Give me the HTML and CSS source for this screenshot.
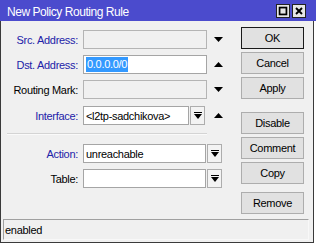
FILE: index.html
```html
<!DOCTYPE html>
<html>
<head>
<meta charset="utf-8">
<link rel="stylesheet" href="styles.css">
</head>
<body>
<div class="window">
  <div class="titlebar">
    <span class="title">New Policy Routing Rule</span>
    <div class="wbtns">
      <span class="wbtn"><svg width="14" height="14" viewBox="0 0 14 14"><rect x="3" y="3" width="8" height="8" fill="none" stroke="#000" stroke-width="2"/></svg></span>
      <span class="wbtn"><svg width="14" height="14" viewBox="0 0 14 14"><path d="M3.5 3.5 L10.5 10.5 M10.5 3.5 L3.5 10.5" stroke="#000" stroke-width="2.2"/></svg></span>
    </div>
  </div>
  <div class="body">
    <div class="main">
      <div class="form">
        <div class="row">
          <span class="label blue">Src. Address:</span>
          <span class="field disabled w-full"></span>
          <svg class="arrow" width="9" height="5" viewBox="0 0 9 5"><path d="M0 0 H9 L4.5 5 Z" fill="#000"/></svg>
        </div>
        <div class="row">
          <span class="label blue">Dst. Address:</span>
          <span class="field w-full"><span class="sel">0.0.0.0/0</span></span>
          <svg class="arrow" width="9" height="5" viewBox="0 0 9 5"><path d="M0 5 H9 L4.5 0 Z" fill="#000"/></svg>
        </div>
        <div class="row">
          <span class="label">Routing Mark:</span>
          <span class="field disabled w-full"></span>
          <svg class="arrow" width="9" height="5" viewBox="0 0 9 5"><path d="M0 0 H9 L4.5 5 Z" fill="#000"/></svg>
        </div>
        <div class="row row-if">
          <span class="label blue">Interface:</span>
          <span class="field w-if">&lt;l2tp-sadchikova&gt;</span>
          <span class="dd"><svg width="8" height="7" viewBox="0 0 8 7"><rect x="0" y="0" width="8" height="1" fill="#000"/><path d="M0 2 H8 L4 7 Z" fill="#000"/></svg></span>
          <svg class="arrow arrow-if" width="9" height="5" viewBox="0 0 9 5"><path d="M0 5 H9 L4.5 0 Z" fill="#000"/></svg>
        </div>
        <div class="sep"></div>
        <div class="row">
          <span class="label blue">Action:</span>
          <span class="field w-act">unreachable</span>
          <span class="dd"><svg width="8" height="7" viewBox="0 0 8 7"><rect x="0" y="0" width="8" height="1" fill="#000"/><path d="M0 2 H8 L4 7 Z" fill="#000"/></svg></span>
        </div>
        <div class="row">
          <span class="label">Table:</span>
          <span class="field w-act"></span>
          <span class="dd"><svg width="8" height="7" viewBox="0 0 8 7"><rect x="0" y="0" width="8" height="1" fill="#000"/><path d="M0 2 H8 L4 7 Z" fill="#000"/></svg></span>
        </div>
      </div>
      <div class="buttons">
        <button class="btn default">OK</button>
        <button class="btn">Cancel</button>
        <button class="btn">Apply</button>
        <button class="btn gap">Disable</button>
        <button class="btn">Comment</button>
        <button class="btn">Copy</button>
        <button class="btn gap2">Remove</button>
      </div>
    </div>
    <div class="status">enabled</div>
  </div>
</div>
</body>
</html>
```

FILE: styles.css
```css
html, body {
  margin: 0;
  padding: 0;
  background: #ffffff;
}

body {
  font-family: "Liberation Sans", Arial, sans-serif;
  font-size: 11px;
  letter-spacing: -0.3px;
  color: #000;
}

.window {
  width: 316px;
  height: 243px;
  display: flex;
  flex-direction: column;
}

.titlebar {
  height: 21px;
  flex: none;
  background: #4b4bcd;
  display: flex;
  align-items: center;
  padding-left: 7px;
  box-sizing: border-box;
}

.title {
  color: #fff;
  font-size: 12px;
  letter-spacing: -0.45px;
  padding-top: 2px;
  flex: 1;
}

.wbtns {
  display: flex;
  gap: 2px;
  margin-right: 10px;
}

.wbtn {
  width: 14px;
  height: 14px;
  background: #e6e6e6;
  border: 1px solid #222;
  box-sizing: border-box;
  display: flex;
  align-items: center;
  justify-content: center;
}

.wbtn svg {
  display: block;
  width: 12px;
  height: 12px;
}

.body {
  width: 314px;
  height: 222px;
  box-sizing: border-box;
  background: #f0f0f0;
  border-left: 1px solid #3a3a3a;
  border-right: 1px solid #3a3a3a;
  border-bottom: 1px solid #3a3a3a;
  display: flex;
  flex-direction: column;
}

.main {
  flex: 1;
  display: flex;
}

.form {
  width: 240px;
  padding-top: 6px;
  display: flex;
  flex-direction: column;
}

.row {
  height: 25px;
  display: flex;
  align-items: center;
}

.row-if {
  margin-top: 1px;
}

.label {
  width: 77px;
  text-align: right;
  margin-right: 5px;
  flex: none;
}

.blue {
  color: #2222a8;
}

.field {
  height: 19px;
  box-sizing: border-box;
  border: 1px solid #a5a5a5;
  background: #fff;
  display: flex;
  align-items: center;
  padding-left: 2px;
  white-space: nowrap;
  overflow: hidden;
  flex: none;
}

.field.disabled {
  background: #f0f0f0;
  border-color: #b4b4b4;
}

.w-full { width: 124px; }
.w-if { width: 106px; }
.w-act { width: 123px; }

.sel {
  background: #3399ff;
  color: #fff;
  line-height: 15px;
  padding: 0 1px;
}

.arrow {
  display: block;
  margin-left: 7px;
  flex: none;
}

.arrow-if {
  margin-left: 9px;
}

.dd {
  width: 15px;
  height: 19px;
  box-sizing: border-box;
  margin-left: 1px;
  border: 1px solid #adadad;
  background: #f3f3f3;
  display: flex;
  align-items: center;
  justify-content: center;
  flex: none;
}

.dd svg {
  display: block;
}

.sep {
  margin: 5px 34px 6px 6px;
  height: 0;
  border-top: 1px solid #d4d4d4;
  border-bottom: 1px solid #fafafa;
}

.buttons {
  padding-top: 6px;
  display: flex;
  flex-direction: column;
  gap: 3px;
}

.btn {
  width: 63px;
  height: 22px;
  box-sizing: border-box;
  border: 1px solid #adadad;
  background: #e1e1e1;
  font-family: "Liberation Sans", Arial, sans-serif;
  font-size: 11px;
  letter-spacing: -0.3px;
  color: #000;
  padding: 0;
  margin: 0;
}

.btn.default {
  border: 1px solid #1a1a1a;
}

.btn.gap {
  margin-top: 10px;
}

.btn.gap2 {
  margin-top: 5px;
}

.status {
  height: 21px;
  box-sizing: border-box;
  margin: 0 4px 2px 2px;
  border-top: 1px solid #a0a0a0;
  border-left: 1px solid #a0a0a0;
  border-right: 1px solid #f8f8f8;
  border-bottom: 1px solid #f8f8f8;
  display: flex;
  align-items: center;
  padding-left: 1px;
}
```
